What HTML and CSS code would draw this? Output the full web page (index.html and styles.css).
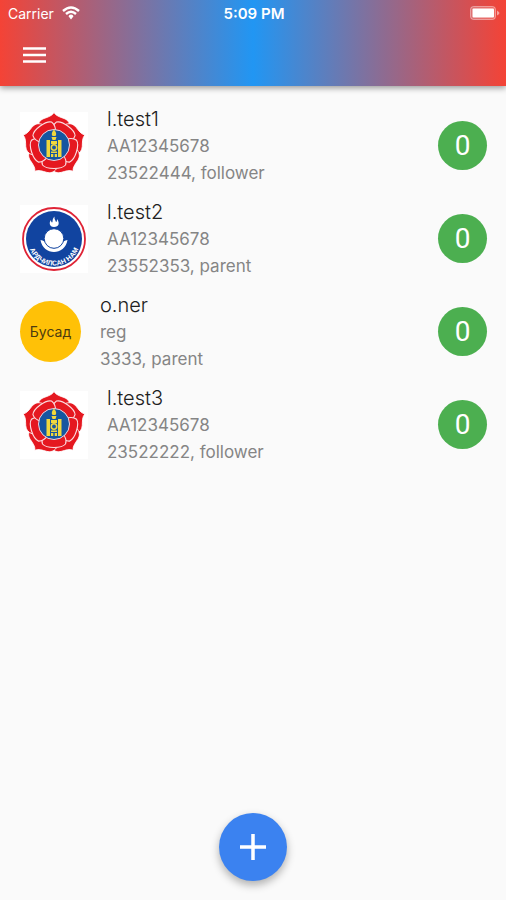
FILE: index.html
```
<!DOCTYPE html>
<html lang="mn">
<head>
<meta charset="utf-8">
<meta name="viewport" content="width=device-width, initial-scale=1">
<title>Members</title>
<link rel="stylesheet" href="styles.css">
</head>
<body>
<svg class="defs" aria-hidden="true">
  <defs>
    <path id="outer-petal" d="M34 .5C36 4 40 5 44 6.500C48 8 50 11 50 15C50 20 46 25 43 28H25C22 25 18 20 18 15C18 11 20 8 24 6.500C28 5 32 4 34 .5Z"/>
    <path id="inner-petal" d="M34 9.500C38 9.500 43 10 45.500 13C47 17 45 21 42 25H26C23 21 21 17 22.500 13C25 10 30 9.500 34 9.500Z"/>
    <symbol id="rose" viewBox="0 0 68 68">
      <rect width="68" height="68" fill="#fff"/>
      <g fill="#e51820" stroke="#fff" stroke-width=".8">
        <use href="#outer-petal"/>
        <use href="#outer-petal" transform="rotate(72 34 33)"/>
        <use href="#outer-petal" transform="rotate(144 34 33)"/>
        <use href="#outer-petal" transform="rotate(216 34 33)"/>
        <use href="#outer-petal" transform="rotate(288 34 33)"/>
      </g>
      <g fill="#e51820" stroke="#fbdfe2" stroke-width="1.100">
        <use href="#inner-petal" transform="rotate(36 34 33)"/>
        <use href="#inner-petal" transform="rotate(108 34 33)"/>
        <use href="#inner-petal" transform="rotate(180 34 33)"/>
        <use href="#inner-petal" transform="rotate(252 34 33)"/>
        <use href="#inner-petal" transform="rotate(324 34 33)"/>
      </g>
      <circle cx="34" cy="33" r="15.500" fill="#1556a0" stroke="#f3d5dc" stroke-width="1"/>
      <path fill="#f1d83c" d="M34 17.500C36 20 37 22 35.500 24H32.500C31 22 32 20 34 17.500ZM31.500 25H36.500L35.500 28H32.500ZM26.500 28H30V45H26.500ZM38 28H41.500V45H38ZM31 29H37V32H31Z"/>
      <circle cx="34" cy="35.500" r="2.700" fill="#1556a0" stroke="#f1d83c" stroke-width="1.500"/>
      <path fill="#f1d83c" d="M31 39.500H37V41H31ZM31 42H33.300V45H31ZM34.700 42H37V45H34.700Z"/>
    </symbol>
  </defs>
</svg>

<header class="app-bar">
  <div class="status">
    <div class="carrier">
      <span>Carrier</span>
      <svg class="wifi" viewBox="0 0 18 14" aria-hidden="true">
        <path d="M1 5Q9-2 17 5M4 8Q9 3.500 14 8" fill="none" stroke="#fff" stroke-width="2.400"/>
        <path d="M9 8.500a2.600 2.600 0 0 1 2.500 1.800L9 13.500 6.500 10.300A2.600 2.600 0 0 1 9 8.500Z" fill="#fff"/>
      </svg>
    </div>
    <time>5:09 PM</time>
    <svg class="battery" viewBox="0 0 30 14" aria-hidden="true">
      <rect x=".5" y=".5" width="25" height="13" rx="3" fill="#fff" fill-opacity=".2" stroke="#fff" stroke-opacity=".4"/>
      <rect x="2.500" y="2.500" width="21.500" height="9" rx="1" fill="#fff"/>
      <path d="M27 4.500Q29.500 6 29.500 7T27 9.500Z" fill="#fff" opacity=".5"/>
    </svg>
  </div>
  <button class="menu" aria-label="Menu">
    <svg viewBox="0 0 24 16" aria-hidden="true"><path d="M0 1.500H23M0 8H23M0 14.500H23" stroke="#fff" stroke-width="2.500"/></svg>
  </button>
</header>

<main>
  <ul class="members">
    <li class="member">
      <svg class="logo" aria-hidden="true"><use href="#rose"/></svg>
      <div class="details"><h2>l.test1</h2><p>AA12345678</p><p>23522444, follower</p></div>
      <span class="count">0</span>
    </li>
    <li class="member">
      <svg class="logo" viewBox="0 0 68 68" aria-hidden="true">
        <rect width="68" height="68" fill="#fff"/>
        <circle cx="34" cy="34" r="31" fill="#fff" stroke="#df2436" stroke-width="1.800"/>
        <circle cx="34" cy="34" r="28" fill="#1144a0"/>
        <path fill="#fff" d="M34 22C29 22 29 17 31 15C31 17 32 18 32.500 17C32.500 15 33 13 34.500 11.500C34 14 35.500 15 36 17C37 17 37 15 37 14C40 18 39 22 34 22Z"/>
        <path fill="#fff" d="M20.500 35Q25 36 26 38C30 45 38 45 42 38Q43 36 47.500 35C45 51 23 51 20.500 35Z"/>
        <circle cx="34" cy="33.500" r="9.800" fill="#fff" stroke="#1144a0"/>
        <path id="motto" d="M8.800 42A26.400 26.400 0 0 0 59.200 42" fill="none"/>
        <text class="motto"><textPath href="#motto" startOffset="50%" text-anchor="middle">АРДЧИЛСАН НАМ</textPath></text>
      </svg>
      <div class="details"><h2>l.test2</h2><p>AA12345678</p><p>23552353, parent</p></div>
      <span class="count">0</span>
    </li>
    <li class="member">
      <span class="avatar">Бусад</span>
      <div class="details"><h2>o.ner</h2><p>reg</p><p>3333, parent</p></div>
      <span class="count">0</span>
    </li>
    <li class="member">
      <svg class="logo" aria-hidden="true"><use href="#rose"/></svg>
      <div class="details"><h2>l.test3</h2><p>AA12345678</p><p>23522222, follower</p></div>
      <span class="count">0</span>
    </li>
  </ul>
</main>

<footer class="actions">
  <button class="add" aria-label="Add">
    <svg viewBox="0 0 28 28" aria-hidden="true"><path d="M14 1V27M1 14H27" stroke="#fff" stroke-width="3.500"/></svg>
  </button>
</footer>
</body>
</html>
```
FILE: styles.css
```
* { box-sizing: border-box; }
body {
  margin: 0;
  min-height: 100vh;
  display: flex;
  flex-direction: column;
  background: #fafafa;
  color: #212121;
  font-family: Inter, "Noto Sans", sans-serif;
}
button { border: 0; padding: 0; cursor: pointer; }
svg { display: block; }
.defs { position: absolute; width: 0; height: 0; }
.app-bar {
  background: linear-gradient(90deg, #f44336, #2196f3 50%, #f44336);
  box-shadow: 0 2px 6px rgba(0, 0, 0, .4);
  color: #fff;
  padding-bottom: 10px;
}
.status {
  display: grid;
  grid-template-columns: 1fr auto 1fr;
  align-items: center;
  height: 26px;
  padding: 0 6px 0 8px;
  font-size: 14px;
}
.carrier { display: flex; align-items: center; gap: 8px; }
.status time { font-size: 15px; font-weight: 600; }
.wifi { width: 18px; height: 14px; }
.battery { width: 30px; height: 14px; justify-self: end; }
.menu {
  display: grid;
  place-items: center;
  width: 42px;
  height: 42px;
  margin: 8px 0 0 14px;
  background: none;
}
.menu svg { width: 24px; height: 16px; }
main { flex: 1; }
.members { list-style: none; margin: 0; padding: 13px 19px 0 20px; }
.member { display: flex; align-items: center; height: 93px; }
.logo { width: 68px; height: 68px; flex: none; }
.motto { font: 700 7px "Liberation Sans", sans-serif; fill: #fff; }
.avatar {
  display: grid;
  place-items: center;
  flex: none;
  width: 61px;
  height: 61px;
  border-radius: 50%;
  background: #ffc107;
  color: #4c3b10;
  font-size: 14px;
}
.details { flex: 1; padding: 2px 0 0 19px; }
.details h2, .details p { margin: 0; line-height: 27px; }
.details h2 { font-size: 20px; font-weight: 300; }
.details p { font-size: 17px; font-weight: 400; color: #858585; }
.count {
  display: grid;
  place-items: center;
  width: 49px;
  height: 49px;
  border-radius: 50%;
  background: #4caf50;
  color: #fff;
  font: 28px Roboto, sans-serif;
}
.actions { display: flex; justify-content: center; padding-bottom: 19px; }
.add {
  display: grid;
  place-items: center;
  width: 68px;
  height: 68px;
  border-radius: 50%;
  background: #3b82f0;
  box-shadow: 0 4px 8px rgba(0, 0, 0, .3);
}
.add svg { width: 28px; height: 28px; }
```
